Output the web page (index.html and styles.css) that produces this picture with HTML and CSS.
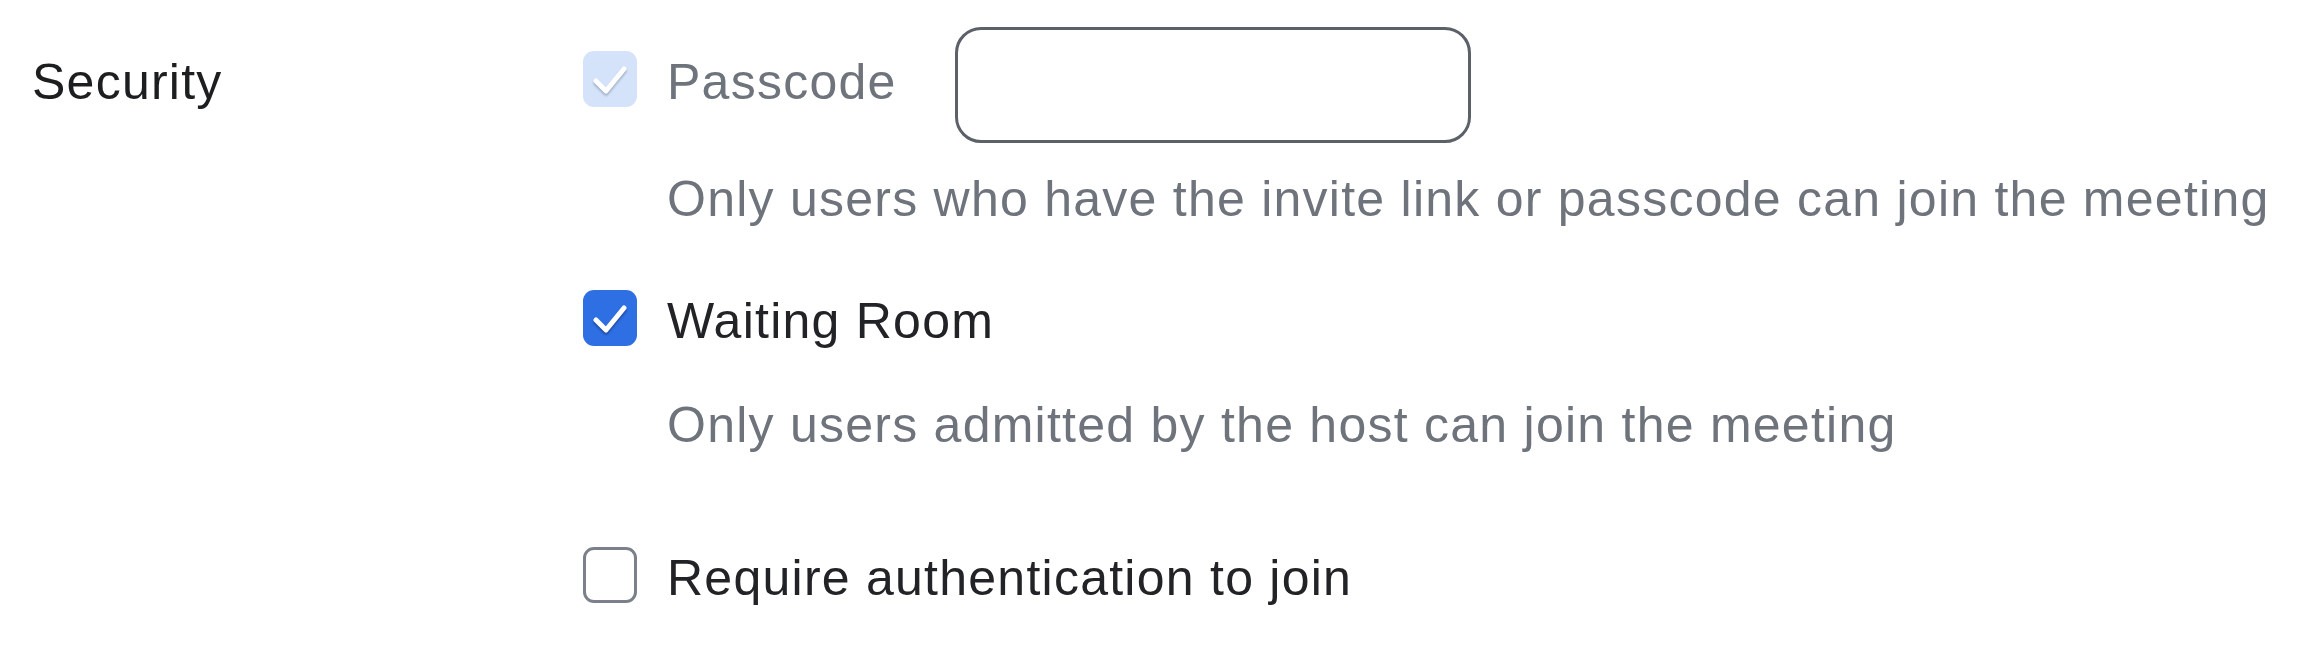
FILE: index.html
```html
<!DOCTYPE html>
<html lang="en">
<head>
<meta charset="utf-8">
<title>Security</title>
<link rel="stylesheet" href="styles.css">
</head>
<body>
<div class="setting">
  <div class="setting-label">Security</div>
  <div class="setting-options">
    <div class="option-row option-first">
      <span class="checkbox checkbox-disabled">
        <svg viewBox="0 0 54 56" width="54" height="56"><path d="M13 30 L23 40 L41 18" /></svg>
      </span>
      <span class="option-text text-muted">Passcode</span>
      <span class="passcode-input"></span>
    </div>
    <div class="option-desc desc-first">Only users who have the invite link or passcode can join the meeting</div>
    <div class="option-row option-second">
      <span class="checkbox checkbox-checked">
        <svg viewBox="0 0 54 56" width="54" height="56"><path d="M13 30 L23 40 L41 18" /></svg>
      </span>
      <span class="option-text">Waiting Room</span>
    </div>
    <div class="option-desc desc-second">Only users admitted by the host can join the meeting</div>
    <div class="option-row option-third">
      <span class="checkbox checkbox-empty"></span>
      <span class="option-text">Require authentication to join</span>
    </div>
  </div>
</div>
</body>
</html>
```
FILE: styles.css
```css
html, body {
  margin: 0;
  padding: 0;
  background: #ffffff;
}

body {
  font-family: "Liberation Sans", Arial, sans-serif;
  font-size: 50px;
  letter-spacing: 1.25px;
  color: #222326;
}

.setting {
  display: flex;
  padding: 15px 0 0 32px;
}

.setting-label {
  width: 551px;
  flex: none;
  padding-top: 39px;
  line-height: 56px;
  color: #1d1e20;
}

.setting-options {
  display: flex;
  flex-direction: column;
}

.option-row {
  display: flex;
  align-items: center;
}

.option-second {
  margin-top: 60px;
}

.option-third {
  margin-top: 91px;
}

.checkbox {
  flex: none;
  width: 54px;
  height: 56px;
  box-sizing: border-box;
  border-radius: 11px;
  display: flex;
}

.checkbox svg path {
  fill: none;
  stroke: #ffffff;
  stroke-width: 5;
  stroke-linecap: round;
  stroke-linejoin: round;
}

.checkbox-disabled {
  background: #d4e3f9;
}

.checkbox-disabled svg {
  filter: drop-shadow(0 2px 1px rgba(60, 70, 90, 0.35));
}

.checkbox-checked {
  background: #2f6fe4;
}

.checkbox-checked svg {
  filter: drop-shadow(0 2px 1px rgba(10, 30, 90, 0.5));
}

.checkbox-empty {
  border: 3px solid #7b808a;
  background: #ffffff;
}

.option-text {
  margin-left: 30px;
  padding-top: 6px;
  line-height: 56px;
  white-space: nowrap;
}

.text-muted {
  color: #6e737c;
}

.passcode-input {
  flex: none;
  width: 516px;
  height: 116px;
  box-sizing: border-box;
  margin-left: 58px;
  margin-top: 12px;
  border: 3px solid #5c6068;
  border-radius: 26px;
  background: #ffffff;
}

.option-desc {
  margin-left: 84px;
  line-height: 56px;
  color: #6e737c;
  white-space: nowrap;
}

.desc-first {
  margin-top: 28px;
}

.desc-second {
  margin-top: 48px;
}
```
